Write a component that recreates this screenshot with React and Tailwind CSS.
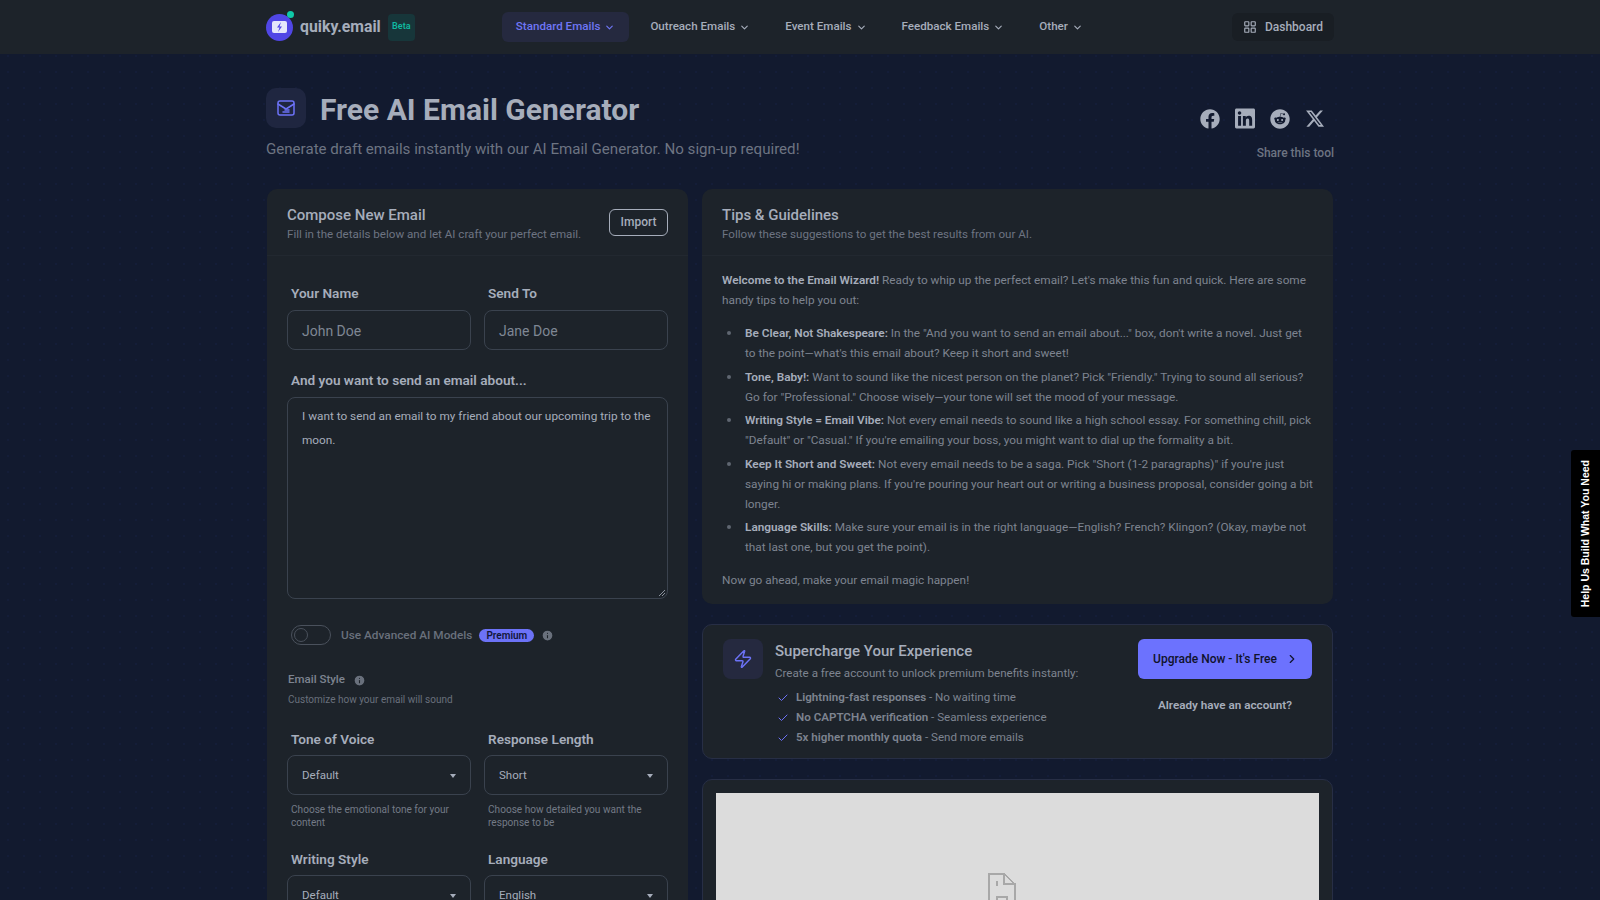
import React from "react";
import { ChevronDown, LayoutGrid, Info, Zap, Check, ChevronRight } from "lucide-react";
import { FaFacebook, FaLinkedin, FaReddit } from "react-icons/fa";
import { FaXTwitter } from "react-icons/fa6";

const Label = ({ children, tight }) => (
  <div className={`px-[4px] text-[13.6px] leading-[20px] font-semibold text-[#a6adbb] ${tight ? "mb-[6px]" : "mb-[7px]"}`}>{children}</div>
);

const Field = ({ label, value }) => (
  <div>
    <Label>{label}</Label>
    <div className="h-[40px] rounded-[8px] border border-[#3a424e] px-[14px] pt-[2px] flex items-center text-[14px] text-[#7f8794]">{value}</div>
  </div>
);

const Select = ({ label, value, help }) => (
  <div>
    <Label tight>{label}</Label>
    <div className="h-[40px] rounded-[8px] border border-[#3a424e] pl-[14px] pr-[14px] pt-[1px] flex items-center justify-between text-[11.5px] text-[#a6adbb]">
      <span>{value}</span>
      <span className="w-0 h-0 border-l-[3px] border-r-[3px] border-t-[4px] border-l-transparent border-r-transparent border-t-[#a6adbb]" />
    </div>
    {help && <div className="px-[4px] mt-[8px] text-[10.1px] leading-[13px] text-[#737a86]">{help}</div>}
  </div>
);

const Tip = ({ title, children }) => (
  <li className="flex mb-[3.5px]">
    <span className="w-[23px] shrink-0 pl-[5px] pt-[8px]">
      <span className="block w-[4px] h-[4px] rounded-full bg-[#5f6671]" />
    </span>
    <span><b className="font-semibold text-[#a6adbb]">{title}</b> {children}</span>
  </li>
);

const Benefit = ({ title, rest }) => (
  <div className="flex items-center h-[20px] text-[11.6px] text-[#7d8490]">
    <Check size={12} strokeWidth={2} className="text-[#6c72f6] ml-[2px] mr-[6px]" />
    <span className="ml-[1px]"><span className="font-semibold">{title}</span> - {rest}</span>
  </div>
);

const NavItem = ({ children, active }) => (
  <div className={`h-[30px] px-[14px] rounded-[6px] flex items-center gap-[4px] text-[11.6px] font-medium ${active ? "bg-[#25293f] text-[#6f76f5]" : "text-[#a6adbb]"}`}>
    {children}
    <ChevronDown size={11} strokeWidth={2.5} />
  </div>
);

export default function App() {
  return (
    <div className="h-screen w-full overflow-hidden relative bg-[#121a2f] bg-[radial-gradient(#141d38_1px,transparent_1px)] bg-[length:16px_16px] font-['Roboto','Open_Sans',sans-serif] text-[#a6adbb]">
      <header className="h-[54px] bg-[#1d232a] flex justify-center">
        <div className="w-[1068px] flex items-center">
          <div className="relative w-[27px] h-[27px] rounded-full bg-[#5046e5] flex items-center justify-center">
            <svg width="15" height="12" viewBox="0 0 15 12">
              <rect x="0" y="0" width="15" height="12" rx="2" fill="#e5e7fb" />
              <path d="M9 1 L5 6.5 H7.5 L6 11 L10 5.5 H7.5 Z" fill="#5046e5" />
            </svg>
            <span className="absolute -top-[3px] -right-[1px] w-[7px] h-[7px] rounded-full bg-[#0fc9a8]" />
          </div>
          <span className="ml-[7px] text-[15.8px] font-bold text-[#a6adbb]">quiky.email</span>
          <span className="ml-[7px] w-[27px] h-[27px] rounded-[4px] bg-[#17363a] text-[#10b9a0] text-[9px] font-semibold flex items-center justify-center">Beta</span>
          <nav className="ml-[87px] flex items-center gap-[7px]">
            <NavItem active>Standard Emails</NavItem>
            <NavItem>Outreach Emails</NavItem>
            <NavItem>Event Emails</NavItem>
            <NavItem>Feedback Emails</NavItem>
            <NavItem>Other</NavItem>
          </nav>
          <div className="ml-auto h-[28px] pl-[11px] pr-[11px] rounded-[6px] bg-[#191e24] flex items-center gap-[8px] text-[12px] font-medium">
            <LayoutGrid size={14} strokeWidth={2} />
            Dashboard
          </div>
        </div>
      </header>

      <main className="w-[1068px] mx-auto">
        <div className="flex justify-between pt-[34px] h-[135px]">
          <div>
            <div className="flex items-start gap-[14px]">
              <div className="w-[40px] h-[40px] rounded-[10px] bg-[#1f2640] flex items-center justify-center">
                <svg width="18" height="16" viewBox="0 0 18 16" fill="none" stroke="#6c72f6" strokeWidth="1.5" strokeLinejoin="round" strokeLinecap="round">
                  <rect x="1" y="1" width="16" height="14" rx="2" />
                  <path d="M1 4 L9 9 L17 4" />
                  <path d="M6 12 H12 M8 10 H12" />
                </svg>
              </div>
              <h1 className="pt-[2px] text-[30px] leading-[40px] font-bold text-[#a6adbb]">Free AI Email Generator</h1>
            </div>
            <p className="mt-[7px] text-[15.1px] leading-[24px] text-[#6d7482]">Generate draft emails instantly with our AI Email Generator. No sign-up required!</p>
          </div>
          <div className="flex flex-col items-end pt-[19px]">
            <div className="flex items-center gap-[15px] text-[#a6adbb] pr-[9px]">
              <span className="w-[20px] flex justify-center"><FaFacebook size={20} /></span>
              <span className="w-[20px] flex justify-center"><FaLinkedin size={23} /></span>
              <span className="w-[20px] flex justify-center"><FaReddit size={20} /></span>
              <span className="w-[20px] flex justify-center"><FaXTwitter size={21} /></span>
            </div>
            <div className="mt-[14px] text-[12px] font-medium text-[#6d7482]">Share this tool</div>
          </div>
        </div>

        <div className="flex gap-[14px] pl-[1px]">
          <section className="w-[421px] shrink-0 bg-[#1d232a] rounded-[10px] h-[800px]">
            <div className="h-[67px] border-b border-[#222830] px-[20px] flex items-center justify-between">
              <div className="pt-[2px]">
                <div className="text-[15px] leading-[22px] font-medium text-[#a6adbb]">Compose New Email</div>
                <div className="text-[11.6px] leading-[16px] text-[#6d7482]">Fill in the details below and let AI craft your perfect email.</div>
              </div>
              <div className="h-[27px] px-[10.5px] rounded-[6px] border border-[#a6adbb] text-[12px] font-medium flex items-center">Import</div>
            </div>
            <div className="px-[20px] pt-[27px]">
              <div className="grid grid-cols-[184px_184px] gap-x-[13px]">
                <Field label="Your Name" value="John Doe" />
                <Field label="Send To" value="Jane Doe" />
              </div>
              <div className="mt-[20px]">
                <Label>And you want to send an email about...</Label>
                <div className="relative h-[202px] rounded-[8px] border border-[#3a424e] px-[14px] py-[7px] text-[11.8px] leading-[23.5px] text-[#a6adbb]">
                  I want to send an email to my friend about our upcoming trip to the moon.
                  <svg className="absolute right-[1px] bottom-[1px]" width="8" height="8" viewBox="0 0 8 8" stroke="#8a919c" strokeWidth="1">
                    <path d="M1 7 L7 1 M4 7 L7 4" />
                  </svg>
                </div>
              </div>
              <div className="mt-[26px] flex items-center pl-[4px] h-[20px]">
                <div className="w-[40px] h-[20px] rounded-full border border-[#4a515c] relative">
                  <span className="absolute left-[2px] top-[2px] w-[14px] h-[14px] rounded-full border border-[#4a515c]" />
                </div>
                <span className="ml-[10px] pt-[1px] text-[11.8px] font-medium text-[#69707c]">Use Advanced AI Models</span>
                <span className="ml-[7px] h-[13px] px-[7px] rounded-full bg-[#6c72f6] text-[#12163a] text-[10px] font-semibold flex items-center">Premium</span>
                <Info size={13} className="ml-[7px] text-[#1d232a] fill-[#69707c]" />
              </div>
              <div className="mt-[25px] flex items-center h-[20px] pl-[1px]">
                <span className="text-[11.5px] font-medium text-[#7d8490]">Email Style</span>
                <Info size={13} className="ml-[8px] text-[#1d232a] fill-[#69707c]" />
              </div>
              <div className="pl-[1px] text-[10px] leading-[20px] text-[#69707c]">Customize how your email will sound</div>
              <div className="mt-[19px] grid grid-cols-[184px_184px] gap-x-[13px] gap-y-[20px]">
                <Select label="Tone of Voice" value="Default" help="Choose the emotional tone for your content" />
                <Select label="Response Length" value="Short" help="Choose how detailed you want the response to be" />
                <Select label="Writing Style" value="Default" />
                <Select label="Language" value="English" />
              </div>
            </div>
          </section>

          <div className="flex-1 min-w-0 flex flex-col gap-[20px] pr-[1px]">
            <section className="h-[415px] bg-[#1d232a] rounded-[10px]">
              <div className="h-[67px] border-b border-[#222830] px-[20px] pt-[2px] flex flex-col justify-center">
                <div className="text-[15px] leading-[22px] font-medium text-[#a6adbb]">Tips &amp; Guidelines</div>
                <div className="text-[11.6px] leading-[16px] text-[#6d7482]">Follow these suggestions to get the best results from our AI.</div>
              </div>
              <div className="px-[20px] pt-[14px] text-[11.8px] leading-[20px] text-[#7d8490]">
                <p className="mb-[13px]"><b className="font-semibold text-[#a6adbb]">Welcome to the Email Wizard!</b> Ready to whip up the perfect email? Let's make this fun and quick. Here are some handy tips to help you out:</p>
                <ul className="mb-[13px]">
                  <Tip title="Be Clear, Not Shakespeare:">In the "And you want to send an email about..." box, don't write a novel. Just get to the point—what's this email about? Keep it short and sweet!</Tip>
                  <Tip title="Tone, Baby!:">Want to sound like the nicest person on the planet? Pick "Friendly." Trying to sound all serious? Go for "Professional." Choose wisely—your tone will set the mood of your message.</Tip>
                  <Tip title="Writing Style = Email Vibe:">Not every email needs to sound like a high school essay. For something chill, pick "Default" or "Casual." If you're emailing your boss, you might want to dial up the formality a bit.</Tip>
                  <Tip title="Keep It Short and Sweet:">Not every email needs to be a saga. Pick "Short (1-2 paragraphs)" if you're just saying hi or making plans. If you're pouring your heart out or writing a business proposal, consider going a bit longer.</Tip>
                  <Tip title="Language Skills:">Make sure your email is in the right language—English? French? Klingon? (Okay, maybe not that last one, but you get the point).</Tip>
                </ul>
                <p>Now go ahead, make your email magic happen!</p>
              </div>
            </section>

            <section className="h-[135px] bg-[#1d232a] rounded-[10px] border border-[#272e45] px-[20px] pt-[14px] flex">
              <div className="w-[40px] h-[40px] rounded-[8px] bg-[#25293f] flex items-center justify-center shrink-0">
                <Zap size={20} strokeWidth={1.75} className="text-[#6c72f6]" />
              </div>
              <div className="ml-[12px] flex-1 pt-[1px]">
                <div className="text-[15px] leading-[22px] font-medium text-[#a6adbb]">Supercharge Your Experience</div>
                <div className="text-[11.6px] leading-[22px] text-[#7d8490] mb-[4px]">Create a free account to unlock premium benefits instantly:</div>
                <Benefit title="Lightning-fast responses" rest="No waiting time" />
                <Benefit title="No CAPTCHA verification" rest="Seamless experience" />
                <Benefit title="5x higher monthly quota" rest="Send more emails" />
              </div>
              <div className="w-[174px] shrink-0 flex flex-col items-center">
                <div className="w-full h-[40px] pl-[2px] rounded-[6px] bg-[#6c72fe] text-[#10132c] text-[12px] font-medium flex items-center justify-center gap-[8px]">
                  Upgrade Now - It's Free
                  <ChevronRight size={14} strokeWidth={2} />
                </div>
                <div className="mt-[16px] text-[11.7px] leading-[20px] font-semibold text-[#a6adbb]">Already have an account?</div>
              </div>
            </section>

            <section className="h-[300px] bg-[#1d232a] rounded-[10px] border border-[#272e45] p-[13px]">
              <div className="h-full bg-[#dcdcdc] flex justify-center pt-[80px] pr-[32px]">
                <svg width="28" height="34" viewBox="0 0 28 34" fill="none" stroke="#a8a8a8" strokeWidth="2" shapeRendering="crispEdges">
                  <path d="M1 1 H16 V11 H27 V33 H1 Z" />
                  <path d="M16 1 L27 11" strokeWidth="1.5" />
                  <path d="M9 8 V13" />
                  <path d="M9 27 V24 H19 V27" />
                </svg>
              </div>
            </section>
          </div>
        </div>
      </main>

      <div className="absolute right-0 top-[450px] w-[29px] h-[167px] bg-black rounded-l-[3px] flex items-center justify-center">
        <span className="[writing-mode:vertical-rl] rotate-180 text-[10.5px] font-bold text-white font-['Liberation_Sans',sans-serif] whitespace-nowrap">Help Us Build What You Need</span>
      </div>
    </div>
  );
}
